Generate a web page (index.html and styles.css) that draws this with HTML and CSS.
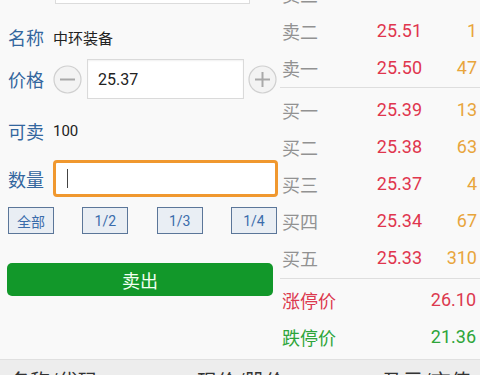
FILE: index.html
```html
<!DOCTYPE html>
<html lang="zh-CN">

<head>
    <meta charset="UTF-8">
    <meta name="viewport" content="width=device-width, initial-scale=1.0">
    <title>卖出</title>
    <link rel="stylesheet" href="styles.css">
</head>

<body>
    <main class="trade">
        <!-- Order form -->
        <section class="order">
            <div class="code-row">
                <input type="text" class="code-input" value="">
            </div>
            <div class="form-row name-row">
                <span class="label">名称</span>
                <span class="value">中环装备</span>
            </div>
            <div class="form-row price-row">
                <span class="label">价格</span>
                <span class="step">
                    <svg width="29" height="29" viewBox="0 0 29 29">
                        <circle cx="14.5" cy="14.5" r="13.5" fill="#f3f3f3" stroke="#cfcfcf" stroke-width="1.2" />
                        <line x1="7" y1="14.5" x2="22" y2="14.5" stroke="#a9a9a9" stroke-width="2" />
                    </svg>
                </span>
                <input type="text" class="price-input" value="25.37">
                <span class="step">
                    <svg width="29" height="29" viewBox="0 0 29 29">
                        <circle cx="14.5" cy="14.5" r="13.5" fill="#f3f3f3" stroke="#cfcfcf" stroke-width="1.2" />
                        <line x1="7" y1="14.5" x2="22" y2="14.5" stroke="#a9a9a9" stroke-width="2" />
                        <line x1="14.5" y1="7" x2="14.5" y2="22" stroke="#a9a9a9" stroke-width="2" />
                    </svg>
                </span>
            </div>
            <div class="form-row avail-row">
                <span class="label">可卖</span>
                <span class="value">100</span>
            </div>
            <div class="form-row qty-row">
                <span class="label">数量</span>
                <div class="qty-input"><span class="caret"></span></div>
            </div>
            <div class="ratio-row">
                <button type="button" class="ratio">全部</button>
                <button type="button" class="ratio">1/2</button>
                <button type="button" class="ratio">1/3</button>
                <button type="button" class="ratio">1/4</button>
            </div>
            <button type="submit" class="sell-button">卖出</button>
        </section>

        <!-- Order book -->
        <section class="book">
            <div class="book-part book-sell">
                <div class="book-row"><span class="lv">卖三</span><span class="px">25.52</span><span class="vol">10</span></div>
                <div class="book-row"><span class="lv">卖二</span><span class="px">25.51</span><span class="vol">1</span></div>
                <div class="book-row"><span class="lv">卖一</span><span class="px">25.50</span><span class="vol">47</span></div>
            </div>
            <div class="book-part book-buy">
                <div class="book-row"><span class="lv">买一</span><span class="px">25.39</span><span class="vol">13</span></div>
                <div class="book-row"><span class="lv">买二</span><span class="px">25.38</span><span class="vol">63</span></div>
                <div class="book-row"><span class="lv">买三</span><span class="px">25.37</span><span class="vol">4</span></div>
                <div class="book-row"><span class="lv">买四</span><span class="px">25.34</span><span class="vol">67</span></div>
                <div class="book-row"><span class="lv">买五</span><span class="px">25.33</span><span class="vol">310</span></div>
            </div>
            <div class="book-part book-limit">
                <div class="limit-row up"><span>涨停价</span><span>26.10</span></div>
                <div class="limit-row down"><span>跌停价</span><span>21.36</span></div>
            </div>
        </section>
    </main>

    <!-- Holdings header -->
    <footer class="hold-head">
        <span>名称/代码</span>
        <span>现价/股价</span>
        <span>盈亏/市值</span>
    </footer>
</body>

</html>
```

FILE: styles.css
```css
/* Global styles */
* {
    padding: 0;
    margin: 0;
    box-sizing: border-box;
}

body {
    font-family: Roboto, "Noto Sans CJK SC", sans-serif;
    background-color: #f9f9f9;
    width: 480px;
    height: 375px;
    overflow: hidden;
}

.trade {
    display: grid;
    grid-template-columns: 280px 200px;
    margin-top: -36px;
}

/* Order form */
.order {
    display: flex;
    flex-direction: column;
    padding-left: 8px;
}

.code-row {
    height: 40px;
    padding-left: 47px;
}

.code-input {
    width: 195px;
    height: 40px;
    border: 1px solid #dcdcdc;
    background-color: #fff;
}

.form-row {
    display: flex;
    align-items: center;
}

.label {
    width: 45px;
    font-size: 18px;
    color: #33669e;
    flex-shrink: 0;
}

.value {
    font-size: 15px;
    color: #222;
}

.name-row {
    margin-top: 18px;
    height: 30px;
}

.price-row {
    margin-top: 7px;
    height: 40px;
}

.step {
    display: flex;
    width: 29px;
    height: 29px;
}

.price-input {
    width: 157px;
    height: 40px;
    margin: 0 4px 0 5px;
    padding-left: 10px;
    border: 1px solid #dadada;
    background-color: #fff;
    box-shadow: inset 0 1px 2px rgba(0, 0, 0, 0.06);
    font-family: Roboto, sans-serif;
    font-size: 16px;
    color: #222;
    outline: none;
}

.avail-row {
    margin-top: 17px;
    height: 30px;
}

.qty-row {
    margin-top: 14px;
    height: 37px;
}

.qty-input {
    width: 225px;
    height: 37px;
    border: 3px solid #f0982f;
    border-radius: 4px;
    background-color: #fff;
    display: flex;
    align-items: center;
    padding-left: 11px;
}

.caret {
    width: 1px;
    height: 19px;
    background-color: #444;
}

.ratio-row {
    margin-top: 10px;
    width: 269px;
    display: flex;
    justify-content: space-between;
}

.ratio {
    width: 46px;
    height: 27px;
    border: 1px solid #5b7699;
    background-color: #e9eef4;
    color: #3a6cab;
    font-family: Roboto, "Noto Sans CJK SC", sans-serif;
    font-size: 14px;
}

.sell-button {
    margin-top: 29px;
    margin-left: -1px;
    width: 266px;
    height: 33px;
    border: none;
    border-radius: 5px;
    background-color: #12982a;
    color: #f2fff2;
    font-family: "Noto Sans CJK SC", sans-serif;
    font-size: 18px;
}

/* Order book */
.book {
    padding-top: 11px;
}

.book-sell {
    border-bottom: 1px solid #dedede;
    padding-bottom: 1px;
}

.book-buy {
    padding-top: 3px;
    padding-bottom: 2px;
    border-bottom: 1px solid #dedede;
}

.book-limit {
    padding-top: 2px;
}

.book-row {
    display: grid;
    grid-template-columns: 1fr 60px 55px;
    align-items: center;
    height: 37px;
    padding: 0 3px 0 2px;
    font-size: 18px;
}

.lv {
    color: #929292;
    font-family: "Noto Sans CJK SC", sans-serif;
}

.px {
    color: #e0364e;
    text-align: right;
}

.vol {
    color: #e8a53c;
    text-align: right;
}

.limit-row {
    display: flex;
    justify-content: space-between;
    align-items: center;
    height: 37px;
    padding: 0 4px 0 2px;
    font-size: 18px;
}

.limit-row.up {
    color: #dc3a4f;
}

.limit-row.down {
    color: #2ea53a;
}

/* Holdings header */
.hold-head {
    margin-top: 4px;
    height: 40px;
    display: grid;
    grid-template-columns: 187px 186px 1fr;
    padding: 6px 0 0 10px;
    background-color: #ededed;
    border-top: 1px solid #e0e0e0;
    font-family: "Noto Sans CJK SC", sans-serif;
    font-size: 20px;
    color: #333;
}
```
